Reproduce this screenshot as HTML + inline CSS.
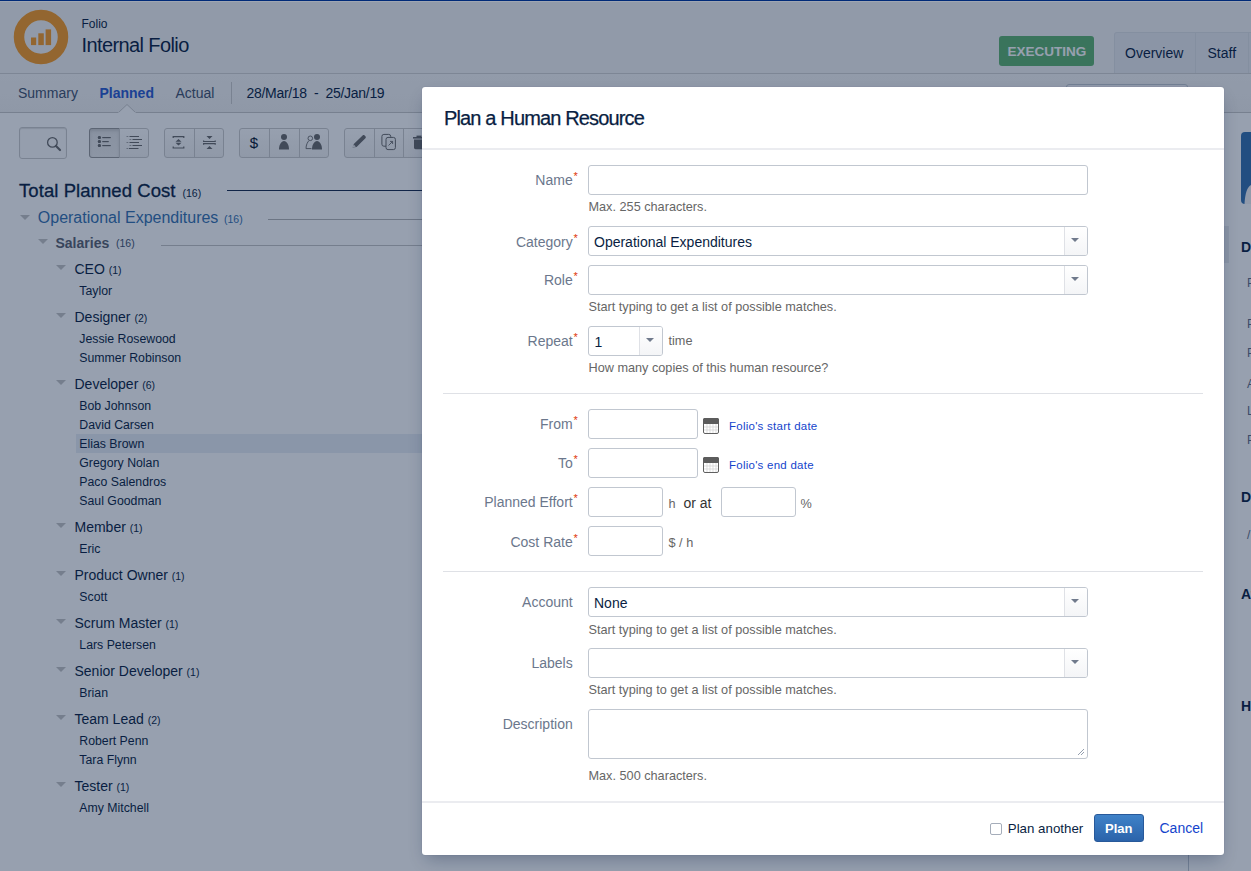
<!DOCTYPE html>
<html><head><meta charset="utf-8"><title>Plan a Human Resource</title>
<style>
html,body{margin:0;padding:0;width:1251px;height:871px;overflow:hidden;background:#fff}
body{position:relative;font-family:"Liberation Sans",sans-serif}
.t{position:absolute;white-space:pre;font-family:"Liberation Sans",sans-serif}
#page,#dlg{position:absolute;left:0;top:0;width:1251px;height:871px}
#blanket{position:absolute;left:0;top:0;width:1251px;height:871px;background:rgba(9,30,66,0.425)}
</style></head><body>
<div id="page">
<div style="position:absolute;left:0px;top:0px;width:1251px;height:73px;background:#f5f5f5"></div>
<div style="position:absolute;left:0px;top:73px;width:1251px;height:1px;background:#d2d2d2"></div>
<div style="position:absolute;left:0px;top:74px;width:1251px;height:38px;background:linear-gradient(#f6f6f6,#f2f2f2)"></div>
<div style="position:absolute;left:0px;top:112px;width:1251px;height:1px;background:#c8c8c8"></div>
<svg style="position:absolute;left:13px;top:9px" width="56" height="56" viewBox="0 0 56 56"><circle cx="28" cy="28" r="22" fill="none" stroke="#f89b23" stroke-width="10.5"/><rect x="18" y="28.5" width="5.2" height="7.6" fill="#f89b23"/><rect x="25.3" y="24.3" width="5.5" height="11.8" fill="#f89b23"/><rect x="32.6" y="20.4" width="5.5" height="15.7" fill="#f89b23"/></svg>
<div class="t" style="left:81.5px;top:18px;font-size:12px;line-height:12px;color:#091e42;font-weight:400;">Folio</div>
<div class="t" style="left:81.5px;top:35px;font-size:20px;line-height:20px;color:#091e42;font-weight:400;letter-spacing:-0.6px">Internal Folio</div>
<div style="position:absolute;left:999px;top:36px;width:95px;height:30px;background:#5fb370;border-radius:3px"></div>
<div class="t" style="left:1007.5px;top:45px;font-size:13.5px;line-height:13.5px;color:#fff;font-weight:700;letter-spacing:0px">EXECUTING</div>
<div style="position:absolute;left:1114px;top:32px;width:140px;height:41px;background:#ebecf0;border:1px solid #dfe1e6;border-bottom:none;border-radius:3px 0 0 0;box-sizing:border-box"></div>
<div style="position:absolute;left:1195px;top:32px;width:1px;height:41px;background:#dfe1e6"></div>
<div style="position:absolute;left:1248px;top:32px;width:1px;height:41px;background:#dfe1e6"></div>
<div class="t" style="left:1125px;top:46px;font-size:14px;line-height:14px;color:#091e42;font-weight:400;">Overview</div>
<div class="t" style="left:1207.5px;top:46px;font-size:14px;line-height:14px;color:#091e42;font-weight:400;">Staff</div>
<div class="t" style="left:18px;top:86px;font-size:14px;line-height:14px;color:#42526e;font-weight:400;">Summary</div>
<div class="t" style="left:99.5px;top:86px;font-size:14px;line-height:14px;color:#2a5ad0;font-weight:700;">Planned</div>
<div class="t" style="left:175.5px;top:86px;font-size:14px;line-height:14px;color:#42526e;font-weight:400;">Actual</div>
<div style="position:absolute;left:231px;top:82px;width:1px;height:22px;background:#ccc"></div>
<div class="t" style="left:246.5px;top:86px;font-size:14px;line-height:14px;color:#091e42;font-weight:400;letter-spacing:-0.3px">28/Mar/18&nbsp; - &nbsp;25/Jan/19</div>
<svg style="position:absolute;left:118px;top:104px" width="18" height="10" viewBox="0 0 18 10"><path d="M0 9 L9 0.5 L18 9" fill="#fff" stroke="#c8c8c8" stroke-width="1"/><rect x="0" y="8.5" width="18" height="1.5" fill="#fff"/></svg>
<div style="position:absolute;left:1066px;top:84px;width:122px;height:40px;background:#f4f5f7;border:1px solid #c1c7d0;border-radius:3px;box-sizing:border-box"></div>
<div style="position:absolute;left:1188px;top:113px;width:1px;height:760px;background:#c1c7d0"></div>
<div style="position:absolute;left:1189px;top:113px;width:62px;height:760px;background:#fff"></div>
<div style="position:absolute;left:1241px;top:132px;width:20px;height:71.5px;background:#3572b0;border-radius:4px;overflow:hidden"></div>
<svg style="position:absolute;left:1241px;top:132px" width="10" height="72" viewBox="0 0 10 72"><path d="M3.5 72 C4 62 6 55 10 53 L10 72Z" fill="#f4f5f7"/></svg>
<div class="t" style="left:1241px;top:239.5px;font-size:14px;line-height:14px;color:#091e42;font-weight:700;">D</div>
<div class="t" style="left:1247px;top:277px;font-size:12px;line-height:12px;color:#5e6c84;font-weight:400;">P</div>
<div class="t" style="left:1247px;top:318px;font-size:12px;line-height:12px;color:#5e6c84;font-weight:400;">P</div>
<div class="t" style="left:1247px;top:347px;font-size:12px;line-height:12px;color:#5e6c84;font-weight:400;">P</div>
<div class="t" style="left:1247px;top:378px;font-size:12px;line-height:12px;color:#5e6c84;font-weight:400;">A</div>
<div class="t" style="left:1247px;top:405px;font-size:12px;line-height:12px;color:#5e6c84;font-weight:400;">L</div>
<div class="t" style="left:1247px;top:434px;font-size:12px;line-height:12px;color:#5e6c84;font-weight:400;">P</div>
<div class="t" style="left:1241px;top:490px;font-size:14px;line-height:14px;color:#091e42;font-weight:700;">D</div>
<div class="t" style="left:1247px;top:529px;font-size:12px;line-height:12px;color:#5e6c84;font-weight:400;">/</div>
<div class="t" style="left:1241px;top:587px;font-size:14px;line-height:14px;color:#091e42;font-weight:700;">At</div>
<div class="t" style="left:1241px;top:699px;font-size:14px;line-height:14px;color:#091e42;font-weight:700;">H</div>
<div style="position:absolute;left:1224px;top:226px;width:5px;height:37px;background:#ebecf0"></div>
<div style="position:absolute;left:19px;top:127px;width:48px;height:32px;background:#fcfcfc;border:1px solid #ccc;border-radius:3px;box-sizing:border-box;box-shadow:inset 0 1px 1px rgba(0,0,0,0.12)"></div>
<svg style="position:absolute;left:19px;top:127px" width="48" height="32" viewBox="0 0 48 32"><circle cx="33.4" cy="15.4" r="4.8" fill="none" stroke="#6a6a6a" stroke-width="1.3"/><path d="M37 19 L41 23" stroke="#6a6a6a" stroke-width="2.2" stroke-linecap="round"/></svg>
<div style="position:absolute;left:89px;top:128px;width:60px;height:30px;background:linear-gradient(#fff,#f2f2f2);border:1px solid #ccc;box-sizing:border-box;border-radius:3px"></div>
<div style="position:absolute;left:89px;top:128px;width:31px;height:30px;background:linear-gradient(#e6e6e6,#ededed);border:1px solid #999;border-radius:3px 0 0 3px;box-sizing:border-box;box-shadow:inset 0 2px 3px rgba(0,0,0,0.12)"></div>
<div style="position:absolute;left:119px;top:128px;width:1px;height:30px;background:#ccc"></div>
<svg style="position:absolute;left:89px;top:128px" width="30" height="30" viewBox="0 0 30 30"><circle cx="10.4" cy="9.5" r="1.5" fill="#6a6a6a"/><circle cx="10.4" cy="13.5" r="1.5" fill="#6a6a6a"/><circle cx="10.4" cy="17.5" r="1.5" fill="#6a6a6a"/><rect x="13.5" y="9" width="8" height="1.1" fill="#6a6a6a"/><rect x="13.5" y="13" width="6" height="1.1" fill="#6a6a6a"/><rect x="13.5" y="17" width="8" height="1.1" fill="#6a6a6a"/></svg>
<svg style="position:absolute;left:119px;top:128px" width="30" height="30" viewBox="0 0 30 30"><rect x="7.5" y="8" width="1.8" height="1" fill="#6a6a6a" opacity="0.6"/><rect x="10.5" y="8" width="9.5" height="1" fill="#6a6a6a" opacity="1"/><rect x="10.5" y="11" width="1.8" height="1" fill="#6a6a6a" opacity="0.6"/><rect x="13.5" y="11" width="9.5" height="1" fill="#6a6a6a" opacity="1"/><rect x="7.5" y="14" width="1.8" height="1" fill="#6a6a6a" opacity="0.6"/><rect x="10.5" y="14" width="9.5" height="1" fill="#6a6a6a" opacity="1"/><rect x="10.5" y="17" width="1.8" height="1" fill="#6a6a6a" opacity="0.6"/><rect x="13.5" y="17" width="9.5" height="1" fill="#6a6a6a" opacity="1"/><rect x="7.5" y="20" width="1.8" height="1" fill="#6a6a6a" opacity="0.6"/><rect x="10" y="20" width="9.5" height="1" fill="#6a6a6a" opacity="1"/></svg>
<svg style="position:absolute;left:89px;top:128px" width="30" height="30" viewBox="0 0 30 30"><circle cx="10.4" cy="9.5" r="1.5" fill="#6a6a6a"/><circle cx="10.4" cy="13.5" r="1.5" fill="#6a6a6a"/><circle cx="10.4" cy="17.5" r="1.5" fill="#6a6a6a"/><rect x="13.5" y="9" width="8" height="1.1" fill="#6a6a6a"/><rect x="13.5" y="13" width="6" height="1.1" fill="#6a6a6a"/><rect x="13.5" y="17" width="8" height="1.1" fill="#6a6a6a"/></svg>
<div style="position:absolute;left:164px;top:128px;width:60px;height:30px;background:linear-gradient(#fff,#f2f2f2);border:1px solid #ccc;box-sizing:border-box;border-radius:3px"></div>
<div style="position:absolute;left:194px;top:128px;width:1px;height:30px;background:#ccc"></div>
<svg style="position:absolute;left:164px;top:128px" width="30" height="30" viewBox="0 0 30 30"><path d="M9.2 10 V8.6 H19.8 V10" fill="none" stroke="#6a6a6a" stroke-width="1.2"/><path d="M9.2 18.6 V20 H19.8 V18.6" fill="none" stroke="#6a6a6a" stroke-width="1.2"/><path d="M14.5 11 L17.5 13.8 L11.5 13.8Z M14.5 17.5 L17.5 14.7 L11.5 14.7Z" fill="#6a6a6a"/></svg>
<svg style="position:absolute;left:194px;top:128px" width="30" height="30" viewBox="0 0 30 30"><path d="M12.5 8 L18.5 8 L15.5 11Z M12.5 21 L18.5 21 L15.5 18Z" fill="#6a6a6a"/><path d="M9.6 12.4 V13.5 H21.2 V12.4 M9.6 16.8 V15.7 H21.2 V16.8" fill="none" stroke="#6a6a6a" stroke-width="1.2"/></svg>
<div style="position:absolute;left:239px;top:128px;width:90px;height:30px;background:linear-gradient(#fff,#f2f2f2);border:1px solid #ccc;box-sizing:border-box;border-radius:3px"></div>
<div style="position:absolute;left:269px;top:128px;width:1px;height:30px;background:#ccc"></div>
<div style="position:absolute;left:299px;top:128px;width:1px;height:30px;background:#ccc"></div>
<svg style="position:absolute;left:239px;top:128px" width="30" height="30" viewBox="0 0 30 30"><text x="15" y="20.2" text-anchor="middle" font-family="Liberation Sans" font-size="15" fill="#0a1630" stroke="#0a1630" stroke-width="0.1">$</text></svg>
<svg style="position:absolute;left:269px;top:128px" width="30" height="30" viewBox="0 0 30 30"><circle cx="15" cy="9" r="3" fill="#6a6a6a"/><path d="M10 21.6 C10 16.5 12.3 13 15 13 C17.7 13 20 16.5 20 21.6Z" fill="#6a6a6a"/></svg>
<svg style="position:absolute;left:299px;top:128px" width="30" height="30" viewBox="0 0 30 30"><circle cx="18" cy="9" r="3" fill="#6a6a6a"/><path d="M13 21.6 C13 16.5 15.3 13 18 13 C20.7 13 23 16.5 23 21.6Z" fill="#6a6a6a"/><circle cx="11.3" cy="10.3" r="2.3" fill="none" stroke="#6a6a6a" stroke-width="0.9"/><path d="M10 12.6 C8.5 14 7 17 7 20.6 H12.5" fill="none" stroke="#6a6a6a" stroke-width="0.9"/></svg>
<div style="position:absolute;left:344px;top:128px;width:90px;height:30px;background:linear-gradient(#fff,#f2f2f2);border:1px solid #ccc;box-sizing:border-box;border-radius:3px"></div>
<div style="position:absolute;left:374px;top:128px;width:1px;height:30px;background:#ccc"></div>
<div style="position:absolute;left:403px;top:128px;width:1px;height:30px;background:#ccc"></div>
<svg style="position:absolute;left:344px;top:128px" width="30" height="30" viewBox="0 0 30 30"><path d="M8.6 19.4 L9.8 16 L18.6 7.4 C19.2 6.8 20 6.8 20.6 7.4 L21.4 8.2 C22 8.8 22 9.6 21.4 10.2 L12.6 19 Z" fill="#6a6a6a"/><path d="M8.6 19.4 L9.6 16.4 L11.8 18.6Z" fill="#eee"/></svg>
<svg style="position:absolute;left:374px;top:128px" width="30" height="30" viewBox="0 0 30 30"><rect x="7.9" y="6.4" width="8.8" height="11.8" rx="2" fill="none" stroke="#6a6a6a" stroke-width="1"/><rect x="12" y="9.4" width="9.4" height="12.2" rx="2" fill="#f7f7f7" stroke="#6a6a6a" stroke-width="1"/><path d="M14.5 17.5 L18.5 13.5 M16 13.4 L18.6 13.4 L18.6 16" stroke="#6a6a6a" stroke-width="0.9" fill="none"/></svg>
<svg style="position:absolute;left:403px;top:128px" width="30" height="30" viewBox="0 0 30 30"><rect x="10" y="9" width="12" height="1.6" fill="#6a6a6a"/><rect x="13.5" y="7.6" width="5" height="1.6" fill="#6a6a6a"/><path d="M11 11.6 H21 V19.5 C21 20.5 20.3 21.2 19.3 21.2 H12.7 C11.7 21.2 11 20.5 11 19.5Z" fill="#6a6a6a"/></svg>
<div class="t" style="left:19px;top:182px;font-size:18.5px;line-height:18.5px;color:#091e42;font-weight:400;-webkit-text-stroke:0.3px #091e42;letter-spacing:0.07px">Total Planned Cost</div>
<div class="t" style="left:182.5px;top:187.5px;font-size:10.5px;line-height:10.5px;color:#091e42;font-weight:400;">(16)</div>
<div style="position:absolute;left:227px;top:190px;width:200px;height:1px;background:#172b4d"></div>
<svg style="position:absolute;left:20.2px;top:215px" width="10" height="5" viewBox="0 0 10 5"><path d="M0 0 L10 0 L5.0 5Z" fill="#c4c4c4"/></svg>
<div class="t" style="left:37.8px;top:210px;font-size:16px;line-height:16px;color:#3572b0;font-weight:400;">Operational Expenditures</div>
<div class="t" style="left:224px;top:213.5px;font-size:10.5px;line-height:10.5px;color:#3572b0;font-weight:400;">(16)</div>
<div style="position:absolute;left:268px;top:219px;width:160px;height:1px;background:#b4b4b4"></div>
<svg style="position:absolute;left:37.5px;top:239.3px" width="10" height="5" viewBox="0 0 10 5"><path d="M0 0 L10 0 L5.0 5Z" fill="#c4c4c4"/></svg>
<div class="t" style="left:55.5px;top:235.5px;font-size:14px;line-height:14px;color:#5b6270;font-weight:700;">Salaries</div>
<div class="t" style="left:116px;top:238px;font-size:10.5px;line-height:10.5px;color:#42526e;font-weight:400;">(16)</div>
<div style="position:absolute;left:161px;top:245px;width:266px;height:1px;background:#c4c4c4"></div>
<div style="position:absolute;left:76px;top:434px;width:350px;height:19px;background:#e9eef5"></div>
<svg style="position:absolute;left:56.2px;top:265px" width="10" height="5" viewBox="0 0 10 5"><path d="M0 0 L10 0 L5.0 5Z" fill="#c4c4c4"/></svg>
<div class="t" style="left:74.5px;top:262px;font-size:14px;line-height:14px;color:#091e42">CEO <span style="font-size:10.5px;position:relative;top:-0.5px">(1)</span></div>
<div class="t" style="left:79.3px;top:285px;font-size:12.3px;line-height:12.3px;color:#091e42;font-weight:400;">Taylor</div>
<svg style="position:absolute;left:56.2px;top:313px" width="10" height="5" viewBox="0 0 10 5"><path d="M0 0 L10 0 L5.0 5Z" fill="#c4c4c4"/></svg>
<div class="t" style="left:74.5px;top:310px;font-size:14px;line-height:14px;color:#091e42">Designer <span style="font-size:10.5px;position:relative;top:-0.5px">(2)</span></div>
<div class="t" style="left:79.3px;top:333px;font-size:12.3px;line-height:12.3px;color:#091e42;font-weight:400;">Jessie Rosewood</div>
<div class="t" style="left:79.3px;top:352px;font-size:12.3px;line-height:12.3px;color:#091e42;font-weight:400;">Summer Robinson</div>
<svg style="position:absolute;left:56.2px;top:380px" width="10" height="5" viewBox="0 0 10 5"><path d="M0 0 L10 0 L5.0 5Z" fill="#c4c4c4"/></svg>
<div class="t" style="left:74.5px;top:377px;font-size:14px;line-height:14px;color:#091e42">Developer <span style="font-size:10.5px;position:relative;top:-0.5px">(6)</span></div>
<div class="t" style="left:79.3px;top:400px;font-size:12.3px;line-height:12.3px;color:#091e42;font-weight:400;">Bob Johnson</div>
<div class="t" style="left:79.3px;top:419px;font-size:12.3px;line-height:12.3px;color:#091e42;font-weight:400;">David Carsen</div>
<div class="t" style="left:79.3px;top:438px;font-size:12.3px;line-height:12.3px;color:#091e42;font-weight:400;">Elias Brown</div>
<div class="t" style="left:79.3px;top:457px;font-size:12.3px;line-height:12.3px;color:#091e42;font-weight:400;">Gregory Nolan</div>
<div class="t" style="left:79.3px;top:476px;font-size:12.3px;line-height:12.3px;color:#091e42;font-weight:400;">Paco Salendros</div>
<div class="t" style="left:79.3px;top:495px;font-size:12.3px;line-height:12.3px;color:#091e42;font-weight:400;">Saul Goodman</div>
<svg style="position:absolute;left:56.2px;top:523px" width="10" height="5" viewBox="0 0 10 5"><path d="M0 0 L10 0 L5.0 5Z" fill="#c4c4c4"/></svg>
<div class="t" style="left:74.5px;top:520px;font-size:14px;line-height:14px;color:#091e42">Member <span style="font-size:10.5px;position:relative;top:-0.5px">(1)</span></div>
<div class="t" style="left:79.3px;top:543px;font-size:12.3px;line-height:12.3px;color:#091e42;font-weight:400;">Eric</div>
<svg style="position:absolute;left:56.2px;top:571px" width="10" height="5" viewBox="0 0 10 5"><path d="M0 0 L10 0 L5.0 5Z" fill="#c4c4c4"/></svg>
<div class="t" style="left:74.5px;top:568px;font-size:14px;line-height:14px;color:#091e42">Product Owner <span style="font-size:10.5px;position:relative;top:-0.5px">(1)</span></div>
<div class="t" style="left:79.3px;top:591px;font-size:12.3px;line-height:12.3px;color:#091e42;font-weight:400;">Scott</div>
<svg style="position:absolute;left:56.2px;top:619px" width="10" height="5" viewBox="0 0 10 5"><path d="M0 0 L10 0 L5.0 5Z" fill="#c4c4c4"/></svg>
<div class="t" style="left:74.5px;top:616px;font-size:14px;line-height:14px;color:#091e42">Scrum Master <span style="font-size:10.5px;position:relative;top:-0.5px">(1)</span></div>
<div class="t" style="left:79.3px;top:639px;font-size:12.3px;line-height:12.3px;color:#091e42;font-weight:400;">Lars Petersen</div>
<svg style="position:absolute;left:56.2px;top:667px" width="10" height="5" viewBox="0 0 10 5"><path d="M0 0 L10 0 L5.0 5Z" fill="#c4c4c4"/></svg>
<div class="t" style="left:74.5px;top:664px;font-size:14px;line-height:14px;color:#091e42">Senior Developer <span style="font-size:10.5px;position:relative;top:-0.5px">(1)</span></div>
<div class="t" style="left:79.3px;top:687px;font-size:12.3px;line-height:12.3px;color:#091e42;font-weight:400;">Brian</div>
<svg style="position:absolute;left:56.2px;top:715px" width="10" height="5" viewBox="0 0 10 5"><path d="M0 0 L10 0 L5.0 5Z" fill="#c4c4c4"/></svg>
<div class="t" style="left:74.5px;top:712px;font-size:14px;line-height:14px;color:#091e42">Team Lead <span style="font-size:10.5px;position:relative;top:-0.5px">(2)</span></div>
<div class="t" style="left:79.3px;top:735px;font-size:12.3px;line-height:12.3px;color:#091e42;font-weight:400;">Robert Penn</div>
<div class="t" style="left:79.3px;top:754px;font-size:12.3px;line-height:12.3px;color:#091e42;font-weight:400;">Tara Flynn</div>
<svg style="position:absolute;left:56.2px;top:782px" width="10" height="5" viewBox="0 0 10 5"><path d="M0 0 L10 0 L5.0 5Z" fill="#c4c4c4"/></svg>
<div class="t" style="left:74.5px;top:779px;font-size:14px;line-height:14px;color:#091e42">Tester <span style="font-size:10.5px;position:relative;top:-0.5px">(1)</span></div>
<div class="t" style="left:79.3px;top:802px;font-size:12.3px;line-height:12.3px;color:#091e42;font-weight:400;">Amy Mitchell</div>
</div>
<div id="blanket"></div>
<div style="position:absolute;left:0;top:0;width:1251px;height:1px;background:#002a78"></div>
<div style="position:absolute;left:0;top:1px;width:1251px;height:1px;background:#9fa6b2"></div>
<div id="dlg">
<div style="position:absolute;left:422px;top:87px;width:802px;height:768px;background:#fff;border-radius:3px;box-shadow:0 0 1px rgba(9,30,66,0.3),0 8px 16px -4px rgba(9,30,66,0.3)"></div>
<div class="t" style="left:444px;top:108px;font-size:20px;line-height:20px;color:#091e42;font-weight:400;letter-spacing:-0.85px;-webkit-text-stroke:0.25px #091e42">Plan a Human Resource</div>
<div style="position:absolute;left:422px;top:148px;width:802px;height:2px;background:#ebecf0"></div>
<div class="t" style="right:678.3px;top:173px;font-size:14px;line-height:14px;color:#6b778c;font-weight:400;">Name</div>
<div class="t" style="left:573.5px;top:171px;font-size:11px;line-height:11px;color:#de350b;font-weight:400;">*</div>
<div style="position:absolute;left:588px;top:165px;width:500px;height:30px;background:#fff;border:1px solid #c1c7d0;border-radius:3px;box-sizing:border-box;"></div>
<div class="t" style="left:588.5px;top:201px;font-size:12.7px;line-height:12.7px;color:#666;font-weight:400;">Max. 255 characters.</div>
<div class="t" style="right:678.3px;top:234.5px;font-size:14px;line-height:14px;color:#6b778c;font-weight:400;">Category</div>
<div class="t" style="left:573.5px;top:232.5px;font-size:11px;line-height:11px;color:#de350b;font-weight:400;">*</div>
<div style="position:absolute;left:588px;top:226px;width:500px;height:30px;background:#fff;border:1px solid #c1c7d0;border-radius:3px;box-sizing:border-box;"></div>
<div style="position:absolute;left:1064px;top:227px;width:23px;height:28px;background:linear-gradient(#fff,#f4f5f7);border-left:1px solid #dfe1e6;border-radius:0 2px 2px 0;box-sizing:border-box"></div>
<svg style="position:absolute;left:1070.5px;top:238px" width="8" height="4" viewBox="0 0 8 4"><path d="M0 0 L8 0 L4.0 4Z" fill="#707a8c"/></svg>
<div class="t" style="left:594px;top:235px;font-size:14px;line-height:14px;color:#091e42;font-weight:400;">Operational Expenditures</div>
<div class="t" style="right:678.3px;top:273px;font-size:14px;line-height:14px;color:#6b778c;font-weight:400;">Role</div>
<div class="t" style="left:573.5px;top:271px;font-size:11px;line-height:11px;color:#de350b;font-weight:400;">*</div>
<div style="position:absolute;left:588px;top:265px;width:500px;height:30px;background:#fff;border:1px solid #c1c7d0;border-radius:3px;box-sizing:border-box;"></div>
<div style="position:absolute;left:1064px;top:266px;width:23px;height:28px;background:linear-gradient(#fff,#f4f5f7);border-left:1px solid #dfe1e6;border-radius:0 2px 2px 0;box-sizing:border-box"></div>
<svg style="position:absolute;left:1070.5px;top:277px" width="8" height="4" viewBox="0 0 8 4"><path d="M0 0 L8 0 L4.0 4Z" fill="#707a8c"/></svg>
<div class="t" style="left:588.5px;top:301px;font-size:12.7px;line-height:12.7px;color:#666;font-weight:400;">Start typing to get a list of possible matches.</div>
<div class="t" style="right:678.3px;top:333.5px;font-size:14px;line-height:14px;color:#6b778c;font-weight:400;">Repeat</div>
<div class="t" style="left:573.5px;top:331.5px;font-size:11px;line-height:11px;color:#de350b;font-weight:400;">*</div>
<div style="position:absolute;left:588px;top:326px;width:75px;height:30px;background:#fff;border:1px solid #c1c7d0;border-radius:3px;box-sizing:border-box;"></div>
<div style="position:absolute;left:639px;top:327px;width:23px;height:28px;background:linear-gradient(#fff,#f4f5f7);border-left:1px solid #dfe1e6;border-radius:0 2px 2px 0;box-sizing:border-box"></div>
<svg style="position:absolute;left:645.5px;top:338px" width="8" height="4" viewBox="0 0 8 4"><path d="M0 0 L8 0 L4.0 4Z" fill="#707a8c"/></svg>
<div class="t" style="left:594.5px;top:335px;font-size:14px;line-height:14px;color:#091e42;font-weight:400;">1</div>
<div class="t" style="left:668.5px;top:335px;font-size:12.7px;line-height:12.7px;color:#666;font-weight:400;">time</div>
<div class="t" style="left:588.5px;top:362px;font-size:12.7px;line-height:12.7px;color:#666;font-weight:400;">How many copies of this human resource?</div>
<div style="position:absolute;left:443px;top:393px;width:760px;height:1px;background:#dfe1e6"></div>
<div class="t" style="right:678.3px;top:416.5px;font-size:14px;line-height:14px;color:#6b778c;font-weight:400;">From</div>
<div class="t" style="left:573.5px;top:414.5px;font-size:11px;line-height:11px;color:#de350b;font-weight:400;">*</div>
<div style="position:absolute;left:588px;top:409px;width:110px;height:30px;background:#fff;border:1px solid #c1c7d0;border-radius:3px;box-sizing:border-box;"></div>
<svg style="position:absolute;left:703px;top:418px" width="16" height="16" viewBox="0 0 16 16"><rect x="0.5" y="0.5" width="15" height="15" rx="1.5" fill="#fff" stroke="#606060" stroke-width="1"/><rect x="0" y="0" width="16" height="6" rx="1.5" fill="#5c5c5c"/><path d="M4 6 V15 M7 6 V15 M10 6 V15 M13 6 V15 M1 9 H15 M1 12 H15" stroke="#d0d0d0" stroke-width="0.7"/></svg>
<div class="t" style="left:729px;top:421px;font-size:11.5px;line-height:11.5px;color:#1444cc;font-weight:400;letter-spacing:0.25px">Folio's start date</div>
<div class="t" style="right:678.3px;top:456px;font-size:14px;line-height:14px;color:#6b778c;font-weight:400;">To</div>
<div class="t" style="left:573.5px;top:454px;font-size:11px;line-height:11px;color:#de350b;font-weight:400;">*</div>
<div style="position:absolute;left:588px;top:448px;width:110px;height:30px;background:#fff;border:1px solid #c1c7d0;border-radius:3px;box-sizing:border-box;"></div>
<svg style="position:absolute;left:703px;top:457px" width="16" height="16" viewBox="0 0 16 16"><rect x="0.5" y="0.5" width="15" height="15" rx="1.5" fill="#fff" stroke="#606060" stroke-width="1"/><rect x="0" y="0" width="16" height="6" rx="1.5" fill="#5c5c5c"/><path d="M4 6 V15 M7 6 V15 M10 6 V15 M13 6 V15 M1 9 H15 M1 12 H15" stroke="#d0d0d0" stroke-width="0.7"/></svg>
<div class="t" style="left:729px;top:460px;font-size:11.5px;line-height:11.5px;color:#1444cc;font-weight:400;letter-spacing:0.25px">Folio's end date</div>
<div class="t" style="right:678.3px;top:495px;font-size:14px;line-height:14px;color:#6b778c;font-weight:400;">Planned Effort</div>
<div class="t" style="left:573.5px;top:493px;font-size:11px;line-height:11px;color:#de350b;font-weight:400;">*</div>
<div style="position:absolute;left:588px;top:487px;width:75px;height:30px;background:#fff;border:1px solid #c1c7d0;border-radius:3px;box-sizing:border-box;"></div>
<div class="t" style="left:668.5px;top:497.5px;font-size:12.7px;line-height:12.7px;color:#666;font-weight:400;">h</div>
<div class="t" style="left:683.5px;top:495.5px;font-size:14px;line-height:14px;color:#333;font-weight:400;">or at</div>
<div style="position:absolute;left:721px;top:487px;width:75px;height:30px;background:#fff;border:1px solid #c1c7d0;border-radius:3px;box-sizing:border-box;"></div>
<div class="t" style="left:800.5px;top:497.5px;font-size:12.7px;line-height:12.7px;color:#666;font-weight:400;">%</div>
<div class="t" style="right:678.3px;top:534.5px;font-size:14px;line-height:14px;color:#6b778c;font-weight:400;">Cost Rate</div>
<div class="t" style="left:573.5px;top:532.5px;font-size:11px;line-height:11px;color:#de350b;font-weight:400;">*</div>
<div style="position:absolute;left:588px;top:526px;width:75px;height:30px;background:#fff;border:1px solid #c1c7d0;border-radius:3px;box-sizing:border-box;"></div>
<div class="t" style="left:668.5px;top:537px;font-size:12.7px;line-height:12.7px;color:#666;font-weight:400;">$ / h</div>
<div style="position:absolute;left:443px;top:571px;width:760px;height:1px;background:#dfe1e6"></div>
<div class="t" style="right:678.3px;top:595px;font-size:14px;line-height:14px;color:#6b778c;font-weight:400;">Account</div>
<div style="position:absolute;left:588px;top:587px;width:500px;height:30px;background:#fff;border:1px solid #c1c7d0;border-radius:3px;box-sizing:border-box;"></div>
<div style="position:absolute;left:1064px;top:588px;width:23px;height:28px;background:linear-gradient(#fff,#f4f5f7);border-left:1px solid #dfe1e6;border-radius:0 2px 2px 0;box-sizing:border-box"></div>
<svg style="position:absolute;left:1070.5px;top:599px" width="8" height="4" viewBox="0 0 8 4"><path d="M0 0 L8 0 L4.0 4Z" fill="#707a8c"/></svg>
<div class="t" style="left:594px;top:596px;font-size:14px;line-height:14px;color:#091e42;font-weight:400;">None</div>
<div class="t" style="left:588.5px;top:623.5px;font-size:12.7px;line-height:12.7px;color:#666;font-weight:400;">Start typing to get a list of possible matches.</div>
<div class="t" style="right:678.3px;top:655.5px;font-size:14px;line-height:14px;color:#6b778c;font-weight:400;">Labels</div>
<div style="position:absolute;left:588px;top:648px;width:500px;height:30px;background:#fff;border:1px solid #c1c7d0;border-radius:3px;box-sizing:border-box;"></div>
<div style="position:absolute;left:1064px;top:649px;width:23px;height:28px;background:linear-gradient(#fff,#f4f5f7);border-left:1px solid #dfe1e6;border-radius:0 2px 2px 0;box-sizing:border-box"></div>
<svg style="position:absolute;left:1070.5px;top:660px" width="8" height="4" viewBox="0 0 8 4"><path d="M0 0 L8 0 L4.0 4Z" fill="#707a8c"/></svg>
<div class="t" style="left:588.5px;top:684px;font-size:12.7px;line-height:12.7px;color:#666;font-weight:400;">Start typing to get a list of possible matches.</div>
<div class="t" style="right:678.3px;top:717px;font-size:14px;line-height:14px;color:#6b778c;font-weight:400;">Description</div>
<div style="position:absolute;left:588px;top:709px;width:500px;height:50px;background:#fff;border:1px solid #c1c7d0;border-radius:3px;box-sizing:border-box;"></div>
<svg style="position:absolute;left:1077px;top:748px" width="8" height="8" viewBox="0 0 8 8"><path d="M1 7 L7 1 M4 7 L7 4" stroke="#7a869a" stroke-width="0.8"/></svg>
<div class="t" style="left:588.5px;top:769.5px;font-size:12.7px;line-height:12.7px;color:#666;font-weight:400;">Max. 500 characters.</div>
<div style="position:absolute;left:422px;top:801px;width:802px;height:2px;background:#ebecf0"></div>
<div style="position:absolute;left:990px;top:823px;width:12px;height:12px;background:#fff;border:1px solid #a5adba;border-radius:2px;box-sizing:border-box"></div>
<div class="t" style="left:1007.8px;top:821.5px;font-size:13.3px;line-height:13.3px;color:#091e42;font-weight:400;">Plan another</div>
<div style="position:absolute;left:1094px;top:814px;width:50px;height:28px;background:linear-gradient(#3f82c8,#2b63aa);border:1px solid #28599a;border-radius:3px;box-sizing:border-box"></div>
<div class="t" style="left:1105px;top:822px;font-size:13px;line-height:13px;color:#fff;font-weight:700;">Plan</div>
<div class="t" style="left:1159.5px;top:821px;font-size:14px;line-height:14px;color:#1444cc;font-weight:400;">Cancel</div>
</div>
</body></html>
